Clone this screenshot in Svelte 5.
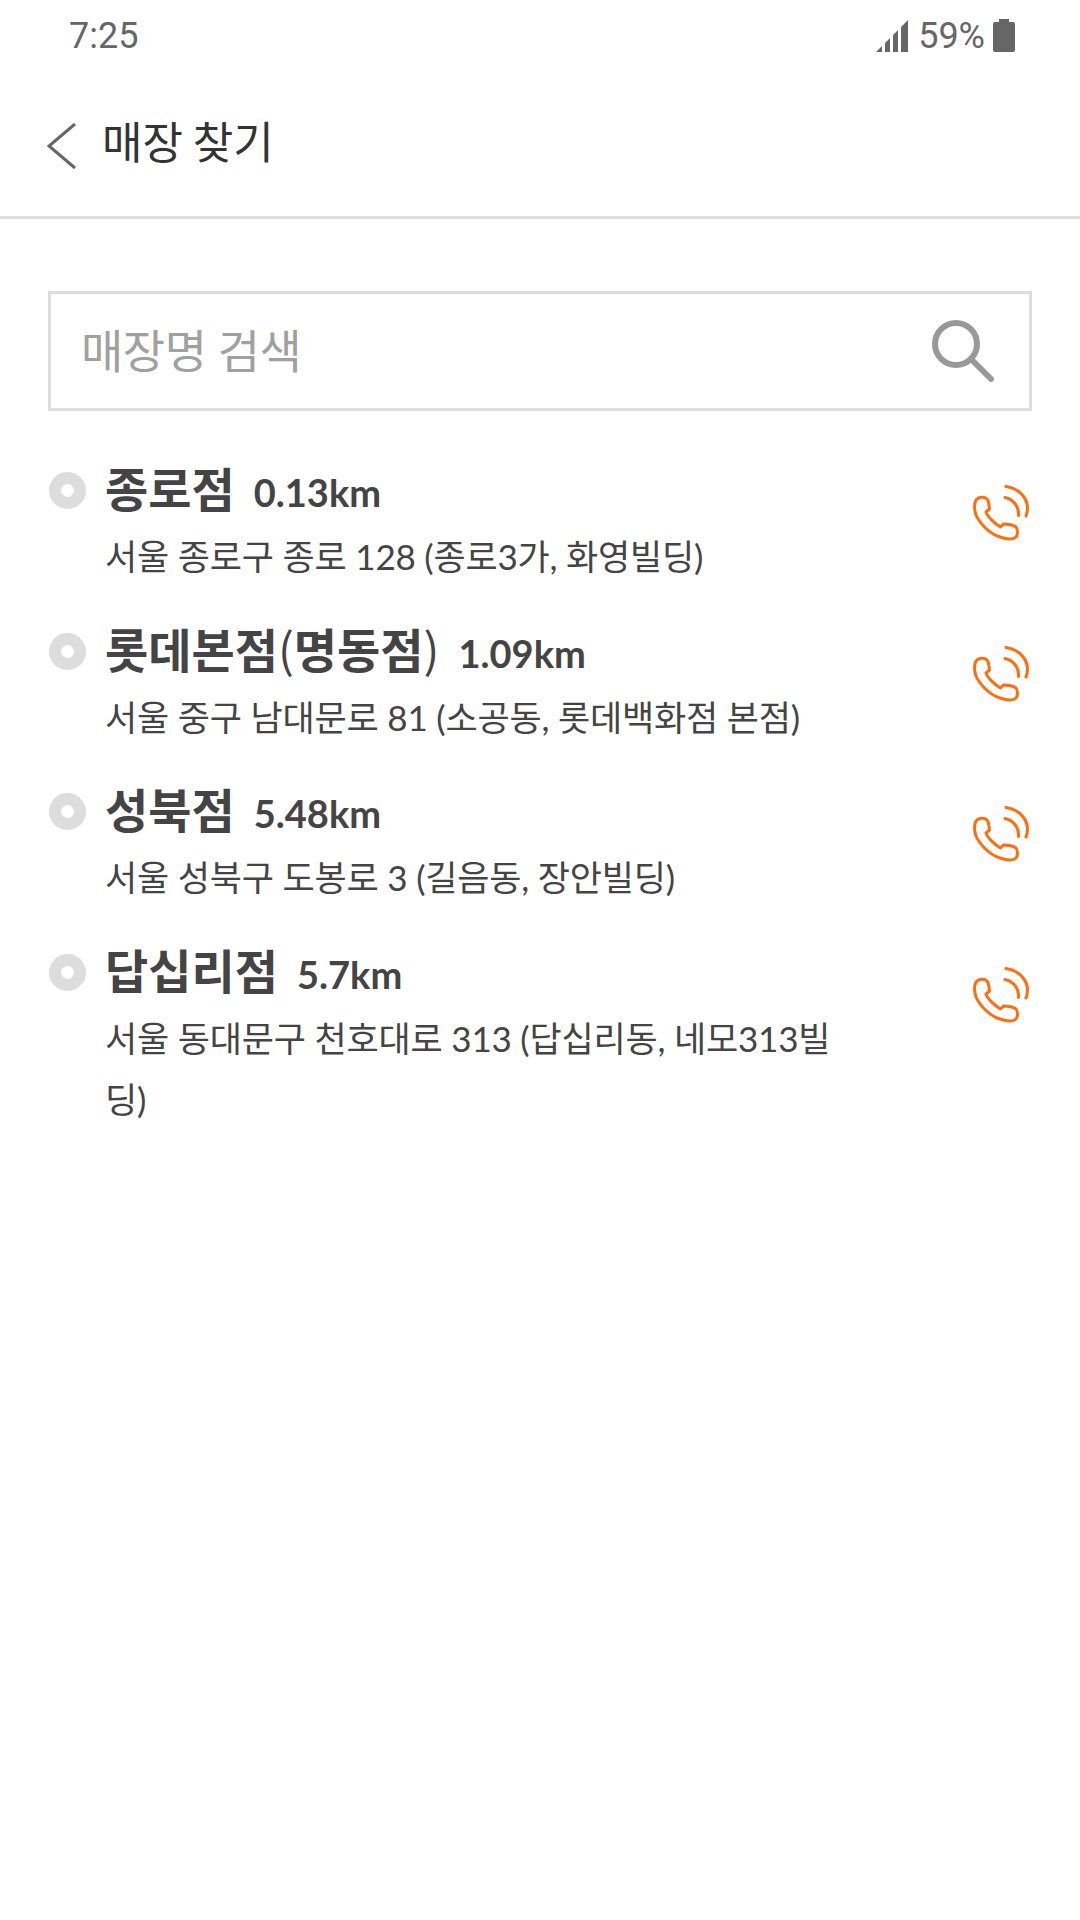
<script>
  const stores = [
    { name: "종로점", dist: "0.13km", addr: "서울 종로구 종로 128 (종로3가, 화영빌딩)" },
    { name: "롯데본점", sub: "명동점", dist: "1.09km", addr: "서울 중구 남대문로 81 (소공동, 롯데백화점 본점)" },
    { name: "성북점", dist: "5.48km", addr: "서울 성북구 도봉로 3 (길음동, 장안빌딩)" },
    { name: "답십리점", dist: "5.7km", addr: "서울 동대문구 천호대로 313 (답십리동, 네모313빌딩)" },
  ];
</script>

<div class="page">
  <div class="status">
    <span class="time">7:25</span>
    <div class="status-right">
      <svg class="signal" width="32" height="34" viewBox="0 0 32 34" fill="#666">
        <path d="M0 33 L6 27 V33 Z M9 24 L14 19 V33 H9 Z M17 16 L22 11 V33 H17 Z M25 8 L32 1 V33 H25 Z" />
      </svg>
      <span class="pct">59%</span>
      <svg class="battery" width="22" height="34" viewBox="0 0 22 34" fill="#666">
        <path d="M6 0 H16 V3 H20 Q22 3 22 5 V31 Q22 33 20 33 H2 Q0 33 0 31 V5 Q0 3 2 3 H6 Z" />
      </svg>
    </div>
  </div>

  <header>
    <svg class="back" width="30" height="48" viewBox="0 0 30 48" fill="none" stroke="#666" stroke-width="3">
      <path d="M28 2 L2 24 L28 46" />
    </svg>
    <h1>매장 찾기</h1>
  </header>

  <div class="search">
    <span class="placeholder">매장명 검색</span>
    <svg width="62" height="62" viewBox="0 0 62 62" fill="none" stroke="#999" stroke-width="6" stroke-linecap="round">
      <circle cx="24" cy="24" r="21" />
      <path d="M40 40 L59 59" />
    </svg>
  </div>

  <ul>
    {#each stores as s}
      <li>
        <span class="dot"></span>
        <div class="info">
          <div class="head">
            <b>{s.name}{#if s.sub}<i>(</i>{s.sub}<i>)</i>{/if}</b>
            <span class="dist">{s.dist}</span>
          </div>
          <p>{s.addr}</p>
        </div>
        <svg class="tel" width="70" height="68" viewBox="0 0 70 68" fill="none" stroke="#ff6d0d" stroke-width="3" stroke-linecap="round" stroke-linejoin="round">
          <path d="M10 21 C12 18 18 17 21 20 C23 22 23 27 23.5 30 L20 33 C21 37 29 45 34.5 48 L37.5 45 C41 45 47 46 50 48 C52 50 52 56 50 58 C47 61 40 60 34 58 C24 55 14 45 10 36 C8 30 8 25 10 21 Z" />
          <path d="M39 18.5 C47 20 53 27 52.5 36.5" />
          <path d="M40 7.5 C52 9 66 20 60 37" />
        </svg>
      </li>
    {/each}
  </ul>
</div>

<style>
  :global(body) {
    background: #fff;
  }
  .page {
    width: 1080px;
    height: 1920px;
    font-family: Lato, "Noto Sans CJK KR", sans-serif;
    color: #333;
  }
  .status {
    height: 72px;
    display: flex;
    justify-content: space-between;
    align-items: center;
    padding: 0 65px 0 69px;
    font-family: Roboto, sans-serif;
    color: #666;
    font-size: 36px;
  }
  .status-right {
    display: flex;
    align-items: center;
    gap: 8px;
  }
  .signal {
    margin-right: 2px;
  }
  header {
    height: 144px;
    display: flex;
    align-items: center;
    border-bottom: 3px solid #ddd;
    padding-left: 47px;
    gap: 25px;
  }
  .back {
    margin-top: 4px;
  }
  h1 {
    margin: -9px 0 0;
    font-family: "Noto Sans CJK KR", sans-serif;
    font-size: 44px;
    font-weight: 400;
    color: #333;
  }
  .search {
    margin: 72px 48px 0;
    height: 120px;
    box-sizing: border-box;
    border: 3px solid #ddd;
    display: flex;
    align-items: center;
    justify-content: space-between;
    padding: 0 35px 0 30px;
  }
  .placeholder {
    font-size: 46px;
    letter-spacing: -0.5px;
    color: #a0a0a0;
    margin-top: -6px;
  }
  ul {
    list-style: none;
    margin: 0;
    padding: 44px 48px 0;
  }
  li {
    display: flex;
    align-items: flex-start;
    margin-bottom: 28.5px;
  }
  .dot {
    width: 13px;
    height: 13px;
    border: 12px solid #ddd;
    border-radius: 50%;
    margin: 17px 0 0 1px;
    flex: none;
  }
  .info {
    margin-left: 19px;
    width: 730px;
  }
  .head {
    display: flex;
    align-items: baseline;
    gap: 19px;
    line-height: 68px;
  }
  b {
    font-size: 47px;
    font-weight: 700;
    color: #444;
  }
  i {
    font-family: "Noto Sans CJK KR", sans-serif;
    font-style: normal;
    font-weight: 400;
    line-height: 1;
  }
  .dist {
    font-size: 38px;
    font-weight: 700;
    color: #444;
  }
  p {
    margin: 0;
    font-size: 35px;
    letter-spacing: -0.2px;
    line-height: 61px;
    color: #444;
    word-break: break-all;
  }
  .tel {
    margin: 24px -4px 0 auto;
    flex: none;
  }
</style>
